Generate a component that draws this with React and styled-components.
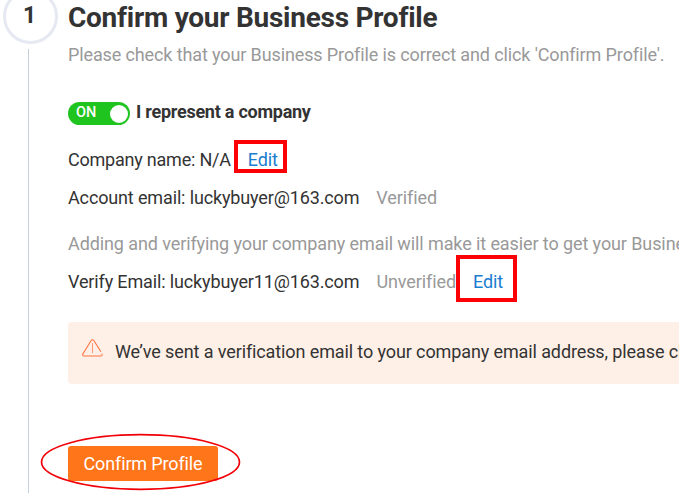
import React, { useState } from 'react';
import styled, { createGlobalStyle } from 'styled-components';

const GlobalStyle = createGlobalStyle`
  * {
    box-sizing: border-box;
  }

  body {
    margin: 0;
    background: #fff;
    overflow: hidden;
  }
`;

const Page = styled.div`
  display: flex;
  width: 679px;
  height: 493px;
  overflow: hidden;
  font-family: Roboto, 'Liberation Sans', sans-serif;
  font-size: 18px;
  line-height: 26px;
  color: #333;
`;

const Steps = styled.div`
  display: flex;
  flex-direction: column;
  flex: none;
  width: 68px;
  padding-left: 3px;
`;

const StepNumber = styled.div`
  display: flex;
  flex: none;
  justify-content: center;
  width: 55px;
  height: 55px;
  margin-top: -11px;
  padding: 8px 2px 0 0;
  border: 3px solid #e7e9f2;
  border-radius: 50%;
  font-size: 23px;
  font-weight: 700;
  line-height: 32px;
`;

const StepLine = styled.div`
  flex: 1;
  width: 1px;
  margin: 5px 0 0 25px;
  background: #c3d0e0;
`;

const Content = styled.div`
  flex: 1;
  min-width: 0;
  white-space: nowrap;
`;

const Title = styled.h1`
  margin: 0;
  padding-top: 1px;
  font-size: 28px;
  font-weight: 700;
  line-height: 34px;
  letter-spacing: -0.26px;
`;

const Row = styled.div`
  display: flex;
  height: 26px;
  margin-top: ${props => props.gap}px;
  font-weight: ${props => props.weight || 400};
  letter-spacing: ${props => props.spacing || '-0.14px'};
  color: ${props => (props.muted ? '#999' : '#333')};
`;

const Toggle = styled.button`
  display: flex;
  align-items: center;
  justify-content: space-between;
  width: 62px;
  height: 23px;
  margin: 3px 6px 0 0;
  padding: 0 2px 0 8px;
  border: 0;
  border-radius: 12px;
  background: #1fc41f;
  color: #fff;
  font: 500 14.5px Roboto, sans-serif;
`;

const ToggleLabel = styled.span`
  padding-bottom: 2px;
`;

const Knob = styled.span`
  width: 18px;
  height: 18px;
  border-radius: 50%;
  background: #fff;
`;

const Status = styled.span`
  margin-left: 17px;
  color: #999;
  letter-spacing: -0.1px;
`;

const EditLink = styled.a`
  position: relative;
  margin-left: 17px;
  color: #1a7dd0;
  letter-spacing: -0.1px;
`;

const Highlight = styled.span`
  position: absolute;
  top: ${props => props.top}px;
  left: ${props => props.left}px;
  width: ${props => props.width}px;
  height: ${props => props.height}px;
  border: 4px solid #fc0006;
`;

const Alert = styled.div`
  display: flex;
  align-items: center;
  height: 62px;
  margin-top: 27px;
  padding: 0 0 2px 14px;
  border-radius: 4px 0 0 4px;
  background: #fff0e7;
  letter-spacing: -0.11px;
`;

const AlertIcon = styled.svg`
  flex: none;
  width: 21px;
  height: 18px;
  margin: -8px 12px 0 0;
`;

const ButtonWrap = styled.div`
  position: relative;
  width: 150px;
  margin-top: 62px;
`;

const ConfirmButton = styled.button`
  display: block;
  width: 150px;
  height: 35px;
  padding: 0;
  border: 0;
  border-radius: 3px;
  background: #ff7519;
  color: #fff;
  font: 400 18px Roboto, sans-serif;
  letter-spacing: -0.14px;
`;

const Ring = styled.svg`
  position: absolute;
  top: -13px;
  left: -28px;
  pointer-events: none;
`;

const App = () => {
  const [isCompany, setIsCompany] = useState(true);

  return (
    <Page>
      <GlobalStyle />
      <Steps>
        <StepNumber>1</StepNumber>
        <StepLine />
      </Steps>
      <Content>
        <Title>Confirm your Business Profile</Title>
        <Row gap={7} muted spacing="-0.12px">Please check that your Business Profile is correct and click 'Confirm Profile'.</Row>
        <Row gap={31} weight={700} spacing="-0.25px">
          <Toggle onClick={() => setIsCompany(!isCompany)}>
            <ToggleLabel>{isCompany ? 'ON' : 'OFF'}</ToggleLabel>
            <Knob />
          </Toggle>
          I represent a company
        </Row>
        <Row gap={22} spacing="-0.22px">
          Company name: N/A
          <EditLink>Edit<Highlight top={-7} left={-14} width={53} height={33} /></EditLink>
        </Row>
        <Row gap={12}>Account email: luckybuyer@163.com<Status>Verified</Status></Row>
        <Row gap={20} muted spacing="-0.1px">Adding and verifying your company email will make it easier to get your Business Verified</Row>
        <Row gap={12}>
          Verify Email: luckybuyer11@163.com
          <Status>Unverified</Status>
          <EditLink>Edit<Highlight top={-14} left={-17} width={61} height={47} /></EditLink>
        </Row>
        <Alert>
          <AlertIcon viewBox="0 0 21 18" fill="none" stroke="#ff7340" strokeWidth="1.1" strokeLinecap="round">
            <path d="M18.6 12.3 L12 1.8 Q10.5 -0.3 9 1.8 L1 14.8 Q0 17 2.3 17 L18.7 17 Q20.4 17 20 15" />
            <path d="M10.5 4.5 V13.5" stroke="#ff9a78" />
          </AlertIcon>
          We’ve sent a verification email to your company email address, please check
        </Alert>
        <ButtonWrap>
          <ConfirmButton>Confirm Profile</ConfirmButton>
          <Ring width="201" height="58" viewBox="0 0 201 58" fill="none">
            <ellipse cx="100.5" cy="29" rx="99" ry="27.3" stroke="#f20008" strokeWidth="1.7" />
          </Ring>
        </ButtonWrap>
      </Content>
    </Page>
  );
}

export default App;
